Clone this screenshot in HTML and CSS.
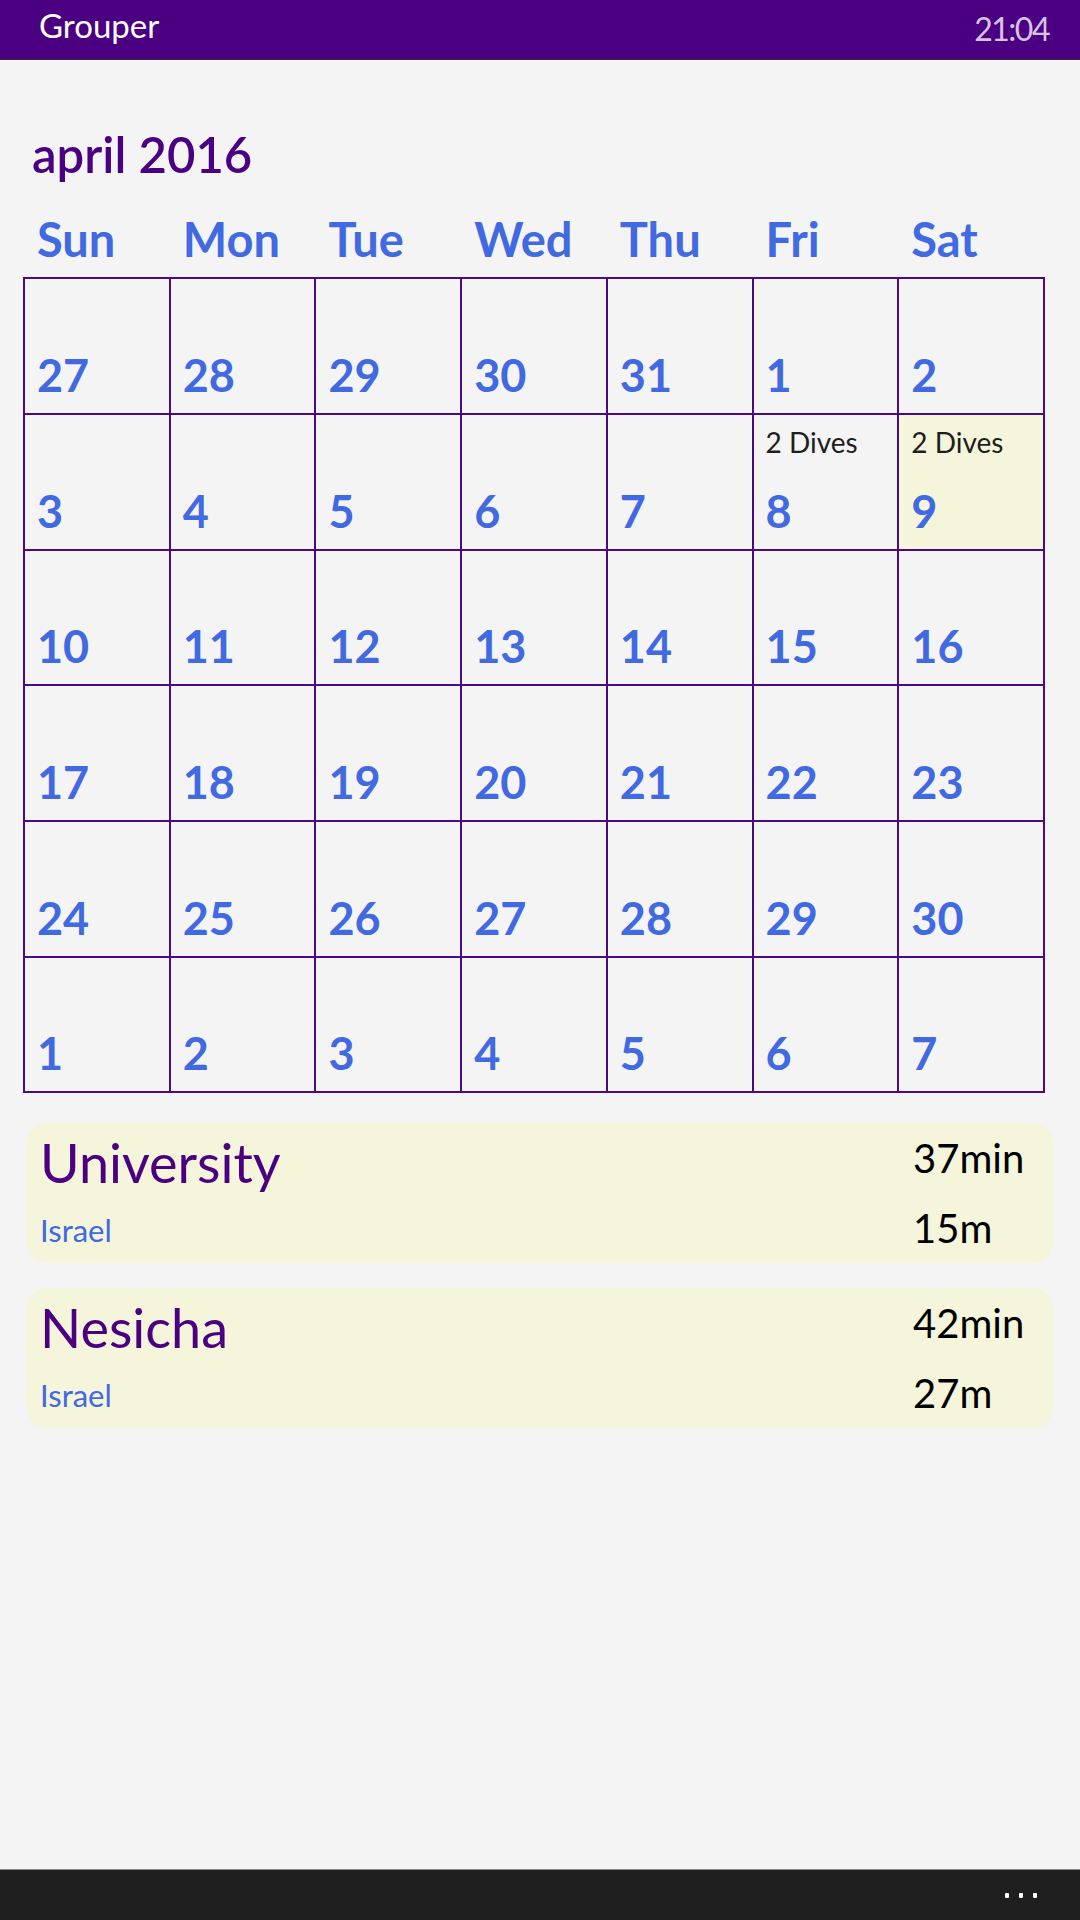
FILE: index.html
```html
<!DOCTYPE html>
<html lang="en">
<head>
<meta charset="utf-8">
<title>Grouper</title>
<link rel="stylesheet" href="styles.css">
</head>
<body>
<div class="app">
  <header class="topbar">
    <span class="app-name">Grouper</span>
    <span class="clock">21:04</span>
  </header>

  <main class="content">
    <h1 class="month">april 2016</h1>

    <div class="weekdays">
      <div class="wd">Sun</div>
      <div class="wd">Mon</div>
      <div class="wd">Tue</div>
      <div class="wd">Wed</div>
      <div class="wd">Thu</div>
      <div class="wd">Fri</div>
      <div class="wd">Sat</div>
    </div>

    <div class="cal">
      <div class="cell"><span class="num">27</span></div>
      <div class="cell"><span class="num">28</span></div>
      <div class="cell"><span class="num">29</span></div>
      <div class="cell"><span class="num">30</span></div>
      <div class="cell"><span class="num">31</span></div>
      <div class="cell"><span class="num">1</span></div>
      <div class="cell"><span class="num">2</span></div>

      <div class="cell"><span class="num">3</span></div>
      <div class="cell"><span class="num">4</span></div>
      <div class="cell"><span class="num">5</span></div>
      <div class="cell"><span class="num">6</span></div>
      <div class="cell"><span class="num">7</span></div>
      <div class="cell"><span class="dives">2 Dives</span><span class="num">8</span></div>
      <div class="cell cell-selected"><span class="dives">2 Dives</span><span class="num">9</span></div>

      <div class="cell"><span class="num">10</span></div>
      <div class="cell"><span class="num">11</span></div>
      <div class="cell"><span class="num">12</span></div>
      <div class="cell"><span class="num">13</span></div>
      <div class="cell"><span class="num">14</span></div>
      <div class="cell"><span class="num">15</span></div>
      <div class="cell"><span class="num">16</span></div>

      <div class="cell"><span class="num">17</span></div>
      <div class="cell"><span class="num">18</span></div>
      <div class="cell"><span class="num">19</span></div>
      <div class="cell"><span class="num">20</span></div>
      <div class="cell"><span class="num">21</span></div>
      <div class="cell"><span class="num">22</span></div>
      <div class="cell"><span class="num">23</span></div>

      <div class="cell"><span class="num">24</span></div>
      <div class="cell"><span class="num">25</span></div>
      <div class="cell"><span class="num">26</span></div>
      <div class="cell"><span class="num">27</span></div>
      <div class="cell"><span class="num">28</span></div>
      <div class="cell"><span class="num">29</span></div>
      <div class="cell"><span class="num">30</span></div>

      <div class="cell"><span class="num">1</span></div>
      <div class="cell"><span class="num">2</span></div>
      <div class="cell"><span class="num">3</span></div>
      <div class="cell"><span class="num">4</span></div>
      <div class="cell"><span class="num">5</span></div>
      <div class="cell"><span class="num">6</span></div>
      <div class="cell"><span class="num">7</span></div>
    </div>

    <div class="dives-list">
      <div class="dive-card">
        <div class="dive-main">
          <div class="site">University</div>
          <div class="country">Israel</div>
        </div>
        <div class="dive-stats">
          <div class="stat">37min</div>
          <div class="stat stat-depth">15m</div>
        </div>
      </div>
      <div class="dive-card">
        <div class="dive-main">
          <div class="site">Nesicha</div>
          <div class="country">Israel</div>
        </div>
        <div class="dive-stats">
          <div class="stat">42min</div>
          <div class="stat stat-depth">27m</div>
        </div>
      </div>
    </div>
  </main>

  <footer class="appbar">
    <div class="more">
      <span class="dot"></span><span class="dot"></span><span class="dot"></span>
    </div>
  </footer>
</div>
</body>
</html>
```

FILE: styles.css
```css
html, body {
  margin: 0;
  padding: 0;
}

body {
  background: #f4f4f4;
  font-family: Lato, "Open Sans", "Liberation Sans", sans-serif;
}

.app {
  width: 1080px;
  height: 1920px;
  display: flex;
  flex-direction: column;
}

/* ---------- top bar ---------- */
.topbar {
  height: 60px;
  box-sizing: border-box;
  background: #4b0082;
  border-bottom: 1px solid #2f2f3a;
  display: flex;
  justify-content: space-between;
  align-items: flex-start;
  padding: 0 31px 0 39px;
}

.app-name {
  color: #ffffff;
  font-size: 33px;
  line-height: 1.2;
  margin-top: 6px;
}

.clock {
  color: #d4c4e2;
  font-size: 32px;
  font-weight: 400;
  letter-spacing: -1.5px;
  line-height: 1.2;
  margin-top: 10px;
}

/* ---------- content ---------- */
.content {
  flex: 1;
}

.month {
  margin: 65px 0 0 32px;
  color: #4b0082;
  font-size: 49px;
  font-weight: 600;
  line-height: 1.2;
}

.weekdays {
  margin: 27px 0 0 23px;
  width: 1022px;
  box-sizing: border-box;
  padding-left: 2px;
  display: grid;
  grid-template-columns: repeat(7, 1fr);
}

.wd {
  padding-left: 12px;
  color: #4169e1;
  font-size: 47px;
  font-weight: 700;
  line-height: 1.2;
}

.cal {
  margin: 10px 0 0 23px;
  width: 1022px;
  height: 816px;
  box-sizing: border-box;
  border-top: 2px solid #4b0a84;
  border-left: 2px solid #4b0a84;
  display: grid;
  grid-template-columns: repeat(7, 1fr);
  grid-template-rows: repeat(6, 1fr);
}

.cell {
  border-right: 2px solid #4b0a84;
  border-bottom: 2px solid #4b0a84;
  display: flex;
  flex-direction: column;
  padding: 11px 4px 11px 12px;
  min-width: 0;
}

.cell-selected {
  background: #f5f5dc;
}

.dives {
  color: #1e1e1e;
  font-size: 28px;
  line-height: 1.2;
}

.num {
  margin-top: auto;
  color: #4169e1;
  font-size: 45px;
  font-weight: 700;
  line-height: 1.2;
}

/* ---------- dive cards ---------- */
.dives-list {
  margin: 30px 27px 0 27px;
  display: flex;
  flex-direction: column;
  gap: 25px;
}

.dive-card {
  height: 140px;
  box-sizing: border-box;
  background: #f5f5dc;
  border-radius: 20px;
  padding: 8px 30px 0 13px;
  display: flex;
  justify-content: space-between;
}

.site {
  color: #4b0082;
  font-size: 54px;
  line-height: 1.2;
}

.country {
  margin-top: 16px;
  color: #4169e1;
  font-size: 31px;
  line-height: 1.2;
}

.dive-stats {
  width: 110px;
  margin-top: 3px;
}

.stat {
  color: #000000;
  font-size: 40px;
  line-height: 1.2;
  white-space: nowrap;
}

.stat-depth {
  margin-top: 22px;
}

/* ---------- bottom app bar ---------- */
.appbar {
  height: 51px;
  box-sizing: border-box;
  background: #1f1f1f;
  border-top: 1px solid #8a8a8a;
  display: flex;
  justify-content: flex-end;
  align-items: center;
  padding-right: 43px;
}

.more {
  display: flex;
  gap: 10px;
}

.dot {
  width: 4px;
  height: 5px;
  background: #ffffff;
  border-radius: 1px;
}
```
